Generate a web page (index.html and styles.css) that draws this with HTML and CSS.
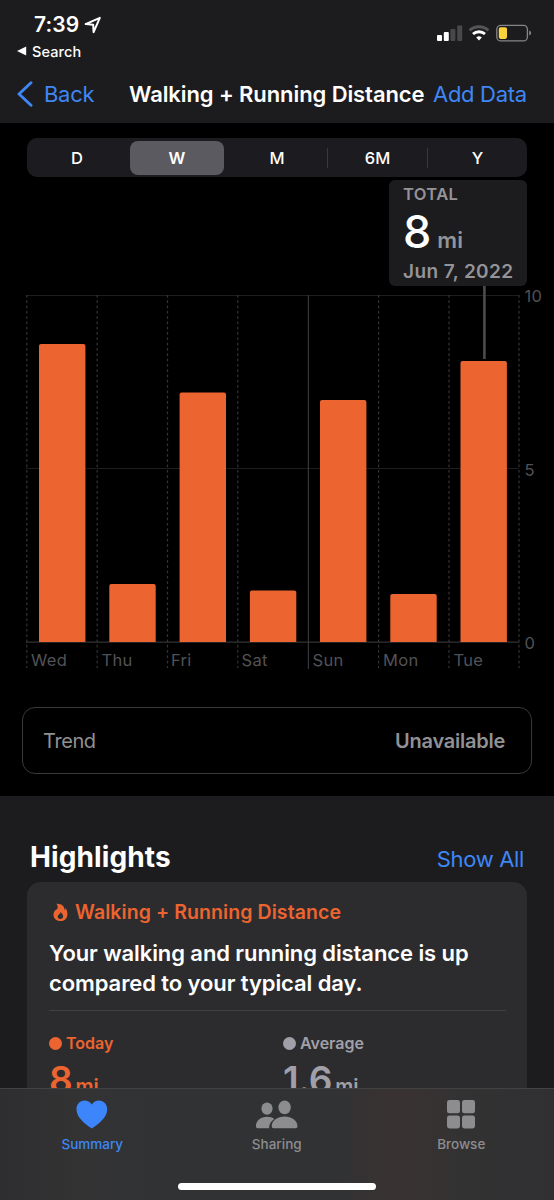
FILE: index.html
```html
<!DOCTYPE html>
<html lang="en">
<head>
<meta charset="utf-8">
<title>Walking + Running Distance</title>
<link rel="stylesheet" href="styles.css">
</head>
<body>
<div class="screen">
  <header class="header">
    <div class="status">
      <div class="status-left">
        <div class="time">7:39
          <svg class="locate" width="18" height="18" viewBox="0 0 18 18"><path d="M1.6 8.1 15.8 1.8 9.6 16.1 9.2 8.7Z" fill="none" stroke="#fff" stroke-width="2" stroke-linejoin="round"/></svg>
        </div>
        <div class="return"><svg width="10" height="10" viewBox="0 0 10 10"><path d="M0 5 9.2.4V9.6Z" fill="#fff"/></svg><span>Search</span></div>
      </div>
      <svg class="status-icons" width="96" height="20" viewBox="0 0 96 20">
        <g fill="#fff"><rect x="0" y="12" width="5" height="6" rx="1"/><rect x="6.8" y="9" width="5" height="9" rx="1"/></g>
        <g fill="#48484a"><rect x="13.4" y="6" width="5" height="12" rx="1"/><rect x="20.2" y="2.5" width="5" height="15.5" rx="1"/></g>
        <g fill="none" stroke-width="2.9"><path d="M32.6 7.4a14 14 0 0 1 18.8 0" stroke="#555557"/><path d="M36 11a9 9 0 0 1 12 0" stroke="#fff"/></g>
        <path d="M39.2 14.4a4.2 4.2 0 0 1 5.6 0L42 17.6Z" fill="#fff"/>
        <rect x="59.8" y="2.3" width="30.6" height="15.6" rx="4" fill="none" stroke="#858587" stroke-width="1.3"/>
        <rect x="61.8" y="4.3" width="8.2" height="11.6" rx="1.8" fill="#fcd23c"/>
        <path d="M92.2 7.6q2 .8 2 2.5t-2 2.5Z" fill="#858587"/>
      </svg>
    </div>
    <nav class="navbar">
      <svg class="chevron" width="16" height="26" viewBox="0 0 16 26"><path d="M14 1.8 2 13 14 24.2" fill="none" stroke="#3f87f5" stroke-width="2.9" stroke-linecap="round" stroke-linejoin="round"/></svg>
      <a class="back">Back</a>
      <h1 class="title">Walking + Running Distance</h1>
      <a class="add">Add Data</a>
    </nav>
  </header>

  <main class="overview">
    <div class="segments">
      <span class="segment">D</span>
      <span class="segment selected">W</span>
      <span class="segment">M</span>
      <span class="segment ruled">6M</span>
      <span class="segment ruled">Y</span>
    </div>

    <section class="chart">
      <svg width="554" height="495" viewBox="0 180 554 495">
        <g stroke="#1d1d1f" stroke-width="1.2">
          <path d="M26 295.5H519M26 468.5H519"/><path d="M26 642.2H519" stroke="#323234"/>
        </g>
        <path d="M26.8 295V668M97.2 295V668M167.5 295V668M237.8 295V668M378.6 295V668M449 295V668M519 295V668" stroke="#343436" stroke-width="1.2" stroke-dasharray="2.7 2.6"/>
        <path d="M308.4 295V669" stroke="#363638" stroke-width="1.2"/>
        <path d="M484.4 286V359" stroke="#4c4c50" stroke-width="2.6"/>
        <g fill="#ec6430">
          <path d="M39 642V346q0-2 2-2h42.400q2 0 2 2V642Z"/>
          <path d="M109.300 642V586q0-2 2-2h42.400q2 0 2 2V642Z"/>
          <path d="M179.600 642V394.500q0-2 2-2h42.400q2 0 2 2V642Z"/>
          <path d="M249.900 642V592.600q0-2 2-2h42.400q2 0 2 2V642Z"/>
          <path d="M320 642V402q0-2 2-2h42.400q2 0 2 2V642Z"/>
          <path d="M390.300 642V596q0-2 2-2h42.400q2 0 2 2V642Z"/>
          <path d="M460.500 642V363q0-2 2-2h42.400q2 0 2 2V642Z"/>
        </g>
        <g class="axis">
          <text x="31" y="666">Wed</text><text x="101.500" y="666">Thu</text><text x="171" y="666">Fri</text><text x="241.500" y="666">Sat</text><text x="312.500" y="666">Sun</text><text x="383" y="666">Mon</text><text x="453.500" y="666">Tue</text>
          <text x="524.500" y="302">10</text><text x="524.500" y="475.500">5</text><text x="524.500" y="649">0</text>
        </g>
      </svg>
      <div class="callout">
        <div class="callout-label">TOTAL</div>
        <div class="callout-value">8<span>mi</span></div>
        <div class="callout-date">Jun 7, 2022</div>
      </div>
    </section>

    <div class="trend"><span class="trend-name">Trend</span><span class="trend-state">Unavailable</span></div>
  </main>

  <section class="highlights">
    <div class="section-head"><h2>Highlights</h2><a class="show-all">Show All</a></div>
    <article class="card">
      <div class="card-kind">
        <svg width="15" height="19" viewBox="0 0 15 19"><path fill-rule="evenodd" d="M3.300.800C8.600.400 11.600 3.400 11.600 7.100c.8-.5.9-1.300.7-2.100 1.500 1.600 2.300 4 2.100 6.700C14.100 15.900 11.200 18 7.400 18 3.200 18 .500 15.300.500 11.700.500 8.900 2 7 4.200 6c.9-1.500.7-3.600-.9-5.200ZM7.400 9c.3 2.100-2.700 2.500-2.700 4.600 0 1.500 1 2.400 2.500 2.400 1.700 0 2.900-1 2.900-2.800 0-1.900-1.300-2.700-2.700-4.200Z" fill="#ec6430"/></svg>
        <span>Walking + Running Distance</span>
      </div>
      <p class="message">Your walking and running distance is up<br>compared to your typical day.</p>
      <div class="figures">
        <div class="figure today"><div class="figure-name"><i></i><span>Today</span></div><div class="figure-value"><b>8</b><small>mi</small></div></div>
        <div class="figure average"><div class="figure-name"><i></i><span>Average</span></div><div class="figure-value"><b>1.6</b><small>mi</small></div></div>
      </div>
    </article>
  </section>

  <footer class="tabbar">
    <div class="tabs">
      <div class="tab active">
        <svg width="32" height="29" viewBox="0 0 32 29"><path d="M15.800 28.500C6.800 22.300.500 16.500.500 9.200.500 4.200 4 .600 8.500.600c3 0 5.700 1.500 7.300 4C17.300 2.100 20 .600 23 .600c4.500 0 8.200 3.600 8.200 8.600 0 7.300-6.400 13.100-15.400 19.300Z" fill="#3c85fb"/></svg>
        <span>Summary</span>
      </div>
      <div class="tab">
        <svg width="43" height="29" viewBox="0 0 43 29" fill="#8d8d8f"><ellipse cx="12" cy="8.600" rx="5.600" ry="6.100"/><path d="M14.200 28.300H2.800Q.900 28.300.900 26.200C.900 20.800 5.600 16.700 12 16.700c3 0 5.500.9 7.400 2.300-3.200 2-5.400 5.400-5.200 9.300Z"/><ellipse cx="29.600" cy="7.300" rx="6.200" ry="6.900"/><path d="M18.600 28.300Q16.700 28.300 16.700 26.200C16.700 20.900 22.400 16.600 29.600 16.600s12.900 4.300 12.900 9.600q0 2.100-1.900 2.100Z"/></svg>
        <span>Sharing</span>
      </div>
      <div class="tab">
        <svg width="29" height="29" viewBox="0 0 29 29" fill="#8d8d8f"><rect x="0" y="0" width="13" height="13.300" rx="2.400"/><rect x="15" y="0" width="13" height="13.300" rx="2.400"/><rect x="0" y="15.500" width="13" height="13" rx="2.400"/><rect x="15" y="15.500" width="13" height="13" rx="2.400"/></svg>
        <span>Browse</span>
      </div>
    </div>
    <div class="home-bar"></div>
  </footer>
</div>
</body>
</html>
```
FILE: styles.css
```css
* { box-sizing: border-box; margin: 0; }
body { background: #1c1c1e; font-family: Inter, "Liberation Sans", sans-serif; color: #fff; }
svg { display: block; flex: none; }
.screen { width: 554px; height: 1200px; display: flex; flex-direction: column; overflow: hidden; position: relative; background: #1c1c1e; white-space: nowrap; }

.header { height: 123px; flex: none; background: #1c1c1e; padding-top: 11px; }
.status { height: 53px; display: flex; justify-content: space-between; padding: 0 21px 0 17px; }
.time { height: 27px; line-height: 27px; padding-left: 17px; display: flex; align-items: center; gap: 5px; font-size: 21px; font-weight: 600; letter-spacing: 0.1px; }
.return { height: 26px; display: flex; align-items: center; gap: 5px; font-size: 14.500px; font-weight: 500; letter-spacing: 0.1px; }
.status-icons { margin-top: 12px; }
.navbar { height: 59px; display: flex; align-items: center; padding-left: 17px; font-size: 22px; }
.back, .add { color: #3f87f5; }
.back { margin-left: 11px; width: 84px; letter-spacing: -0.3px; }
.title { font-size: 22px; font-weight: 600; width: 304px; letter-spacing: -0.090px; margin-left: 1px; }
.add { letter-spacing: -0.3px; }

.overview { height: 673px; flex: none; background: #000; padding-top: 15px; }
.segments { height: 39px; margin: 0 27px; border-radius: 10px; background: #1c1c20; display: grid; grid-template-columns: repeat(5, 1fr); align-items: center; }
.segment { text-align: center; font-size: 16.500px; font-weight: 500; line-height: 34px; }
.selected { background: #5b5a60; border-radius: 8px; margin: 0 3px; font-weight: 600; }
.ruled { line-height: 20px; border-left: 1px solid #39393d; }
.chart { position: relative; margin-top: 3px; height: 495px; }
.axis { font-size: 16.500px; fill: #525256; letter-spacing: 0.3px; }
.callout { position: absolute; left: 389px; top: 0; width: 138px; height: 106px; border-radius: 6px; background: #1c1c1e; padding: 4px 0 0 14px; color: #949498; font-weight: 600; }
.callout-label { font-size: 16.500px; line-height: 20px; letter-spacing: 0.4px; }
.callout-value { height: 56px; color: #fff; font-size: 45px; line-height: 56px; font-weight: 500; }
.callout-value span { font-size: 22px; margin-left: 6px; color: #949498; font-weight: 600; }
.callout-date { font-size: 19px; line-height: 24px; letter-spacing: 0.400px; }
.trend { margin: 32px 22px 0; height: 67px; border: 1.500px solid #39393b; border-radius: 13px; padding: 0 26px 0 20px; display: flex; align-items: center; justify-content: space-between; font-size: 20px; color: #919194; }
.trend-name { letter-spacing: -0.4px; }
.trend-state { font-weight: 600; letter-spacing: -0.250px; }

.highlights { flex: 1; padding: 0 27px; background: #1c1c1e; }
.section-head { height: 86px; padding: 38px 3px 0; display: flex; justify-content: space-between; line-height: 46px; }
.section-head h2 { font-size: 28px; font-weight: 700; letter-spacing: 0.1px; }
.show-all { font-size: 22px; color: #3f87f5; line-height: 50px; letter-spacing: -0.350px; }
.card { height: 330px; border-radius: 14px; background: #2c2c2e; padding: 20px 21px 0 22px; }
.card-kind { height: 20px; display: flex; align-items: center; gap: 7px; padding-left: 4px; font-size: 19.500px; font-weight: 600; letter-spacing: 0.080px; color: #ec6430; }
.message { margin-top: 17px; font-size: 22px; line-height: 29.500px; font-weight: 600; letter-spacing: -0.090px; }
.figures { margin-top: 12px; border-top: 1.500px solid #404042; display: grid; grid-template-columns: 234px 1fr; padding-top: 22px; }
.figure-name { display: flex; align-items: center; gap: 4px; font-size: 16px; line-height: 20px; font-weight: 600; }
.figure-name i { width: 13px; height: 13px; border-radius: 50%; background: currentColor; }
.figure-value { line-height: 44px; margin-top: 5px; }
.figure-value b { font-size: 37px; font-weight: 600; letter-spacing: -0.3px; }
.figure-value small { font-size: 20px; font-weight: 600; margin-left: 3px; }
.today { color: #ec6430; }
.average { color: #a1a0a8; }

.tabbar { position: absolute; left: 0; right: 0; bottom: 0; height: 112px; border-top: 1px solid #424244; background: linear-gradient(90deg, #2e2e30 0, #333334 15%, #303234 35%, #303234 60%, #383232 68%, #383232 76%, #323233 84%, #303032 100%); }
.tabs { display: grid; grid-template-columns: repeat(3, 184.500px); padding-top: 11px; }
.tab { display: flex; flex-direction: column; align-items: center; color: #8d8d8f; font-size: 13.500px; font-weight: 500; line-height: 20px; gap: 5px; }
.active { color: #3f87f5; }
.home-bar { width: 198px; height: 7px; border-radius: 4px; background: #fff; margin: 29px 0 0 178px; }
```
